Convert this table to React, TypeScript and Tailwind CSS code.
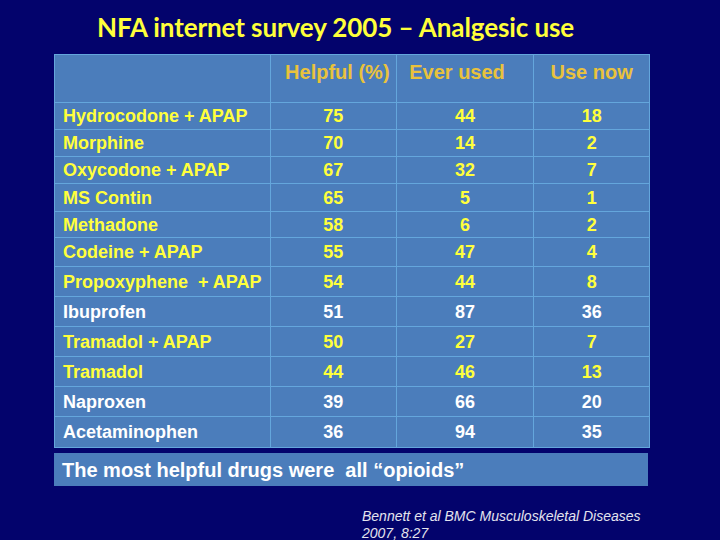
const rows: { name: string; helpful: number; ever: number; now: number; white?: boolean; h: string }[] = [
  { name: "Hydrocodone + APAP", helpful: 75, ever: 44, now: 18, h: "h-[27px]" },
  { name: "Morphine", helpful: 70, ever: 14, now: 2, h: "h-[27px]" },
  { name: "Oxycodone + APAP", helpful: 67, ever: 32, now: 7, h: "h-[27px]" },
  { name: "MS Contin", helpful: 65, ever: 5, now: 1, h: "h-[28px]" },
  { name: "Methadone", helpful: 58, ever: 6, now: 2, h: "h-[26px]" },
  { name: "Codeine + APAP", helpful: 55, ever: 47, now: 4, h: "h-[29px]" },
  { name: "Propoxyphene  + APAP", helpful: 54, ever: 44, now: 8, h: "h-[30px]" },
  { name: "Ibuprofen", helpful: 51, ever: 87, now: 36, white: true, h: "h-[30px]" },
  { name: "Tramadol + APAP", helpful: 50, ever: 27, now: 7, h: "h-[30px]" },
  { name: "Tramadol", helpful: 44, ever: 46, now: 13, h: "h-[30px]" },
  { name: "Naproxen", helpful: 39, ever: 66, now: 20, white: true, h: "h-[30px]" },
  { name: "Acetaminophen", helpful: 36, ever: 94, now: 35, white: true, h: "h-[31px]" },
];

export default function App() {
  return (
    <div className="w-[720px] h-[540px] bg-[#03036c] overflow-hidden">
      {/* Title */}
      <div className="h-[54px] pl-[97px] pt-[10px]">
        <h1 className="text-[26px] font-bold leading-[34px] text-[#ffff3a] tracking-[-0.1px] [font-family:Lato,'Open_Sans',sans-serif]">
          NFA internet survey 2005 – Analgesic use
        </h1>
      </div>

      {/* Table */}
      <div className="ml-[54px] w-[596px] [font-family:'Liberation_Sans',Arial,sans-serif] font-bold">
        <table className="w-full border-collapse bg-[#4b7dbb] text-[18px]">
          <colgroup>
            <col className="w-[216px]" />
            <col className="w-[126px]" />
            <col className="w-[138px]" />
            <col className="w-[116px]" />
          </colgroup>
          <thead>
            <tr className="h-[48px] align-top text-[#e9c23c] text-[20px]">
              <th className="border border-[#64a6dc]"></th>
              <th className="border border-[#64a6dc] pt-[2px] pl-[8px] text-center font-bold">Helpful (%)</th>
              <th className="border border-[#64a6dc] pt-[2px] pr-[16px] text-center font-bold">Ever used</th>
              <th className="border border-[#64a6dc] pt-[2px] text-center font-bold">Use now</th>
            </tr>
          </thead>
          <tbody>
            {rows.map((r) => (
              <tr key={r.name} className={`${r.h} ${r.white ? "text-white" : "text-[#ffff3c]"}`}>
                <td className="border border-[#64a6dc] pl-[8px] whitespace-pre leading-none">{r.name}</td>
                <td className="border border-[#64a6dc] text-center leading-none">{r.helpful}</td>
                <td className="border border-[#64a6dc] text-center leading-none">{r.ever}</td>
                <td className="border border-[#64a6dc] text-center leading-none">{r.now}</td>
              </tr>
            ))}
          </tbody>
        </table>

        {/* Conclusion banner */}
        <div className="mt-[5px] h-[33px] w-[594px] bg-[#4b7dbb] pl-[8px] flex items-center text-white text-[20px] whitespace-pre">
          The most helpful drugs were  all “opioids”
        </div>
      </div>

      {/* Citation */}
      <div className="ml-[362px] mt-[22px] text-[14px] leading-[17px] italic text-[#e4e4ee] [font-family:'Liberation_Sans',Arial,sans-serif]">
        <div>Bennett et al BMC Musculoskeletal Diseases</div>
        <div>2007, 8:27</div>
      </div>
    </div>
  );
}
